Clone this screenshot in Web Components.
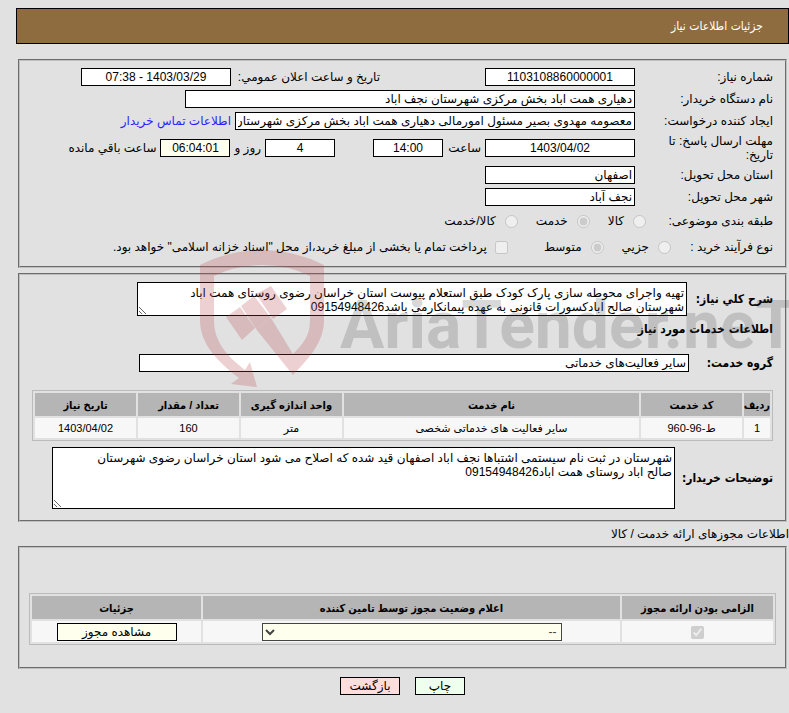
<!DOCTYPE html>
<html lang="fa" dir="rtl">
<head>
<meta charset="utf-8">
<title>جزئیات اطلاعات نیاز</title>
<style>
    body {
        --ff-base: "Liberation Sans", "DejaVu Sans", sans-serif;
        --ff-narrow: "DejaVu Sans Condensed", "DejaVu Sans", sans-serif;
        --clr-field: #fff;
        --clr-cream: #ffffee;
        --clr-head: #b5b5b5;
        margin: 8px 0 8px 16px;
        background: #e1e1e1;
        color: #000;
        font: 12px/14px var(--ff-base);
        direction: rtl;
    }
</style>
</head>
<body>
<need-page></need-page>

<script>
const fieldCss = `
    * { box-sizing: border-box; }
    input, textarea, select, button {
        margin: 0;
        font: 12px/14px var(--ff-base);
        color: #000;
        border: 1px solid #000;
        border-radius: 0;
        direction: rtl;
    }
    input[type=radio], input[type=checkbox] {
        width: 13px;
        height: 13px;
        flex: none;
    }
`;

class PageBanner extends HTMLElement {
    connectedCallback() {
        this.attachShadow({ mode: 'open' }).innerHTML = `
            <style>
                :host {
                    display: block;
                    margin-bottom: 15px;
                    padding: 10px 25px;
                    border: 1px solid #000;
                    background: #8f6c3f;
                    color: #fff;
                }
                h1 { margin: 0; font: 12px/14px var(--ff-narrow); }
            </style>
            <h1><slot></slot></h1>
        `;
    }
}
customElements.define('page-banner', PageBanner);

class FormPanel extends HTMLElement {
    connectedCallback() {
        this.attachShadow({ mode: 'open' }).innerHTML = `
            <style>
                :host { display: block; margin: 0 2px 5px; }
                fieldset {
                    display: flex;
                    flex-direction: column;
                    gap: 4px;
                    min-width: 0;
                    margin: 0;
                    padding: var(--panel-pad, 7px 12px 8px);
                    border: 2px groove #c0c0c0;
                }
            </style>
            <fieldset><slot></slot></fieldset>
        `;
    }
}
customElements.define('form-panel', FormPanel);

class FormRow extends HTMLElement {
    connectedCallback() {
        this.attachShadow({ mode: 'open' }).innerHTML = `
            <style>
                :host { display: flex; align-items: center; gap: 4px; white-space: nowrap; }
            </style>
            <slot></slot>
        `;
    }
}
customElements.define('form-row', FormRow);

// one line read-only box with its caption on the right
class TextField extends HTMLElement {
    connectedCallback() {
        const label = this.getAttribute('label') || '';
        const value = this.getAttribute('value') || '';
        const size = this.getAttribute('size') || '150';
        const place = this.hasAttribute('centered') ? 'center' : 'right';
        const hint = this.getAttribute('hint') || '';
        this.attachShadow({ mode: 'open' }).innerHTML = `
            <style>
                ${fieldCss}
                :host { display: flex; align-items: center; min-width: 0; }
                label {
                    flex: none;
                    width: var(--label-w, auto);
                    padding-left: var(--label-gap, 0);
                    font: var(--label-font, inherit);
                    white-space: normal;
                }
                input {
                    width: ${size}px;
                    min-width: 0;
                    height: 18px;
                    padding: 0 2px;
                    background: var(--field-bg, var(--clr-field));
                    text-align: ${place};
                }
            </style>
            ${label ? `<label for="box">${label}</label>` : ''}
            <input id="box" type="text" readonly value="${value}" ${hint ? `aria-label="${hint}"` : ''}>
        `;
    }
}
customElements.define('text-field', TextField);

class AreaField extends HTMLElement {
    connectedCallback() {
        const label = this.getAttribute('label');
        this.attachShadow({ mode: 'open' }).innerHTML = `
            <style>
                ${fieldCss}
                :host { display: flex; align-items: center; gap: 4px; }
                label { flex: none; width: var(--label-w, 82px); font: bold 12px/14px var(--ff-narrow); white-space: nowrap; }
                textarea {
                    width: var(--area-w, 550px);
                    min-width: 0;
                    height: var(--area-h, 34px);
                    padding: 3px 2px 1px 18px;
                    overflow: hidden;
                    background: var(--clr-field);
                }
            </style>
            <label for="area">${label}</label>
            <textarea id="area" readonly></textarea>
        `;
        this.shadowRoot.querySelector('textarea').value = this.getAttribute('value');
    }
}
customElements.define('area-field', AreaField);

class ChoiceGroup extends HTMLElement {
    connectedCallback() {
        const options = this.getAttribute('options').split(',');
        const picked = Number(this.getAttribute('picked'));
        this.attachShadow({ mode: 'open' }).innerHTML = `
            <style>
                ${fieldCss}
                :host { display: block; }
                div { display: flex; align-items: center; height: 22px; }
                .caption { width: var(--label-w, 127px); flex: none; }
                label { display: flex; align-items: center; gap: 9px; margin-left: 18px; }
                label:last-child { margin-left: 0; }
            </style>
            <div role="radiogroup" aria-labelledby="cap">
                <span class="caption" id="cap">${this.getAttribute('label')}</span>
                ${options.map((text, i) => `
                    <label><input type="radio" name="choice" disabled ${i === picked ? 'checked' : ''}>${text}</label>
                `).join('')}
            </div>
        `;
    }
}
customElements.define('choice-group', ChoiceGroup);

class CheckField extends HTMLElement {
    connectedCallback() {
        this.attachShadow({ mode: 'open' }).innerHTML = `
            <style>
                ${fieldCss}
                :host { display: block; }
                label { display: flex; align-items: center; gap: 8px; }
            </style>
            <label><input type="checkbox" disabled><slot></slot></label>
        `;
    }
}
customElements.define('check-field', CheckField);

class ActionButton extends HTMLElement {
    connectedCallback() {
        this.attachShadow({ mode: 'open' }).innerHTML = `
            <style>
                ${fieldCss}
                :host { display: inline-block; vertical-align: top; }
                button {
                    display: block;
                    width: ${this.getAttribute('size')}px;
                    height: 18px;
                    padding: 0;
                    background: var(--button-bg, var(--clr-cream));
                }
            </style>
            <button type="button"><slot></slot></button>
        `;
    }
}
customElements.define('action-button', ActionButton);

const tableCss = `
    ${fieldCss}
    :host { display: block; }
    table {
        width: 100%;
        table-layout: fixed;
        border: 1px solid #bbb;
        border-collapse: separate;
        border-spacing: 2px;
        font-size: 11px;
        text-align: center;
    }
    th {
        height: 23px;
        padding: 0;
        background: var(--clr-head);
        font-family: "Liberation Sans", var(--ff-narrow);
        white-space: nowrap;
    }
    td { height: 20px; padding: 0; background: #f7f7f7; }
`;

class ServiceTable extends HTMLElement {
    connectedCallback() {
        this.attachShadow({ mode: 'open' }).innerHTML = `
            <style>
                ${tableCss}
                col { width: 101px; }
                .num { width: 26px; }
                .name { width: auto; }
            </style>
            <table>
                <colgroup><col class="num"><col><col class="name"><col><col><col></colgroup>
                <thead>
                    <tr><th>ردیف</th><th>کد خدمت</th><th>نام خدمت</th><th>واحد اندازه گیری</th><th>تعداد / مقدار</th><th>تاریخ نیاز</th></tr>
                </thead>
                <tbody>
                    <tr><td>1</td><td>ط-96-960</td><td>سایر فعالیت های خدماتی شخصی</td><td>متر</td><td>160</td><td>1403/04/02</td></tr>
                </tbody>
            </table>
        `;
    }
}
customElements.define('service-table', ServiceTable);

class PermitTable extends HTMLElement {
    connectedCallback() {
        this.attachShadow({ mode: 'open' }).innerHTML = `
            <style>
                ${tableCss}
                .must { width: 151px; }
                .more { width: 169px; }
                td { height: 21px; }
                td > * { vertical-align: middle; }
                select {
                    display: block;
                    width: 300px;
                    max-width: 100%;
                    height: 18px;
                    margin: 0 auto;
                    padding: 0;
                    border-color: #444;
                    background-color: var(--clr-cream);
                    color: #444;
                }
            </style>
            <table>
                <colgroup><col class="must"><col><col class="more"></colgroup>
                <thead>
                    <tr><th id="must">الزامی بودن ارائه مجوز</th><th id="state">اعلام وضعیت مجوز توسط تامین کننده</th><th>جزئیات</th></tr>
                </thead>
                <tbody>
                    <tr>
                        <td><input type="checkbox" checked disabled aria-labelledby="must"></td>
                        <td><select aria-labelledby="state"><option>--</option></select></td>
                        <td><action-button size="120">مشاهده مجوز</action-button></td>
                    </tr>
                </tbody>
            </table>
        `;
    }
}
customElements.define('permit-table', PermitTable);

// translucent brand mark laid over the form
class BrandMark extends HTMLElement {
    connectedCallback() {
        this.attachShadow({ mode: 'open' }).innerHTML = `
            <style>
                :host {
                    position: absolute;
                    top: 240px;
                    left: 190px;
                    right: 0;
                    height: 155px;
                    display: flex;
                    direction: ltr;
                    overflow: hidden;
                    pointer-events: none;
                }
                svg { flex: none; width: 150px; height: 155px; fill: #b84346; opacity: 0.24; }
                span {
                    padding-top: 48px;
                    font: bold 66px/76px Roboto, "Liberation Sans", sans-serif;
                    color: rgba(60, 60, 60, 0.2);
                }
            </style>
            <svg viewBox="0 0 150 155" aria-hidden="true">
                <path d="M10 25Q40 10 72 10T134 25V80C134 103 118 119 103 135L66 89L81 78L103 114C113 104 120 96 120 80V36Q98 25 72 25T24 36V80C24 102 37 116 55 130L60 122L67 147L41 144L49 138C28 122 10 104 10 80Z"/>
                <path d="M36 77L50 67L65 88L52 100ZM51 66L64 56L81 78L66 89ZM66 54L81 46L97 69L83 79Z"/>
            </svg>
            <span>AriaTender.neT</span>
        `;
    }
}
customElements.define('brand-mark', BrandMark);

class NeedPage extends HTMLElement {
    connectedCallback() {
        this.attachShadow({ mode: 'open' }).innerHTML = `
            <style>
                :host { display: block; }
                a { color: #2a1fff; text-decoration: none; }
                h2 { margin: 2px 0 14px; font: bold 12px/14px var(--ff-narrow); }
                p { margin: 0 0 5px; }
                .main { --label-w: 138px; --label-gap: 25px; }
                .public { --label-w: 149px; margin-right: 101px; }
                .unit { min-width: 34px; }
                .hour { margin-left: 34px; }
                .left { --field-bg: var(--clr-cream); }
                .kind { --label-w: 127px; }
                .process { --label-w: 102px; margin-left: 32px; }
                .details { --panel-pad: 7px 12px 11px; }
                .group { --label-w: 84px; --label-font: bold 12px/14px var(--ff-narrow); margin-bottom: 14px; }
                .notes { --label-w: 94px; --area-w: 623px; --area-h: 62px; margin-top: 2px; }
                .permits { --panel-pad: 45px 9px 22px; }
                .actions { display: flex; justify-content: center; gap: 15px; margin-top: 8px; }
                .print { --button-bg: #eeffee; }
                .back { --button-bg: #ffdddd; }
            </style>
            <page-banner>جزئیات اطلاعات نیاز</page-banner>
            <main>
                <form-panel>
                    <form-row>
                        <text-field class="main" label="شماره نیاز:" value="1103108860000001" centered></text-field>
                        <text-field class="public" label="تاریخ و ساعت اعلان عمومي:" value="1403/03/29 - 07:38" centered></text-field>
                    </form-row>
                    <text-field class="main" label="نام دستگاه خریدار:" value="دهیاری همت اباد بخش مرکزی شهرستان نجف اباد" size="450"></text-field>
                    <form-row>
                        <text-field class="main" label="ایجاد کننده درخواست:" value="معصومه مهدوی بصیر مسئول امورمالی دهیاری همت اباد بخش مرکزی شهرستان نجف اباد" size="400"></text-field>
                        <a href="#">اطلاعات تماس خریدار</a>
                    </form-row>
                    <form-row>
                        <text-field class="main" label="مهلت ارسال پاسخ: تا تاریخ:" value="1403/04/02" centered></text-field>
                        <span class="unit">ساعت</span>
                        <text-field class="hour" value="14:00" size="70" hint="ساعت" centered></text-field>
                        <text-field value="4" size="70" hint="روز" centered></text-field>
                        <span>روز و</span>
                        <text-field class="left" value="06:04:01" size="70" hint="ساعت باقي مانده" centered></text-field>
                        <span>ساعت باقي مانده</span>
                    </form-row>
                    <text-field class="main" label="استان محل تحویل:" value="اصفهان"></text-field>
                    <text-field class="main" label="شهر محل تحویل:" value="نجف آباد"></text-field>
                    <choice-group class="kind" label="طبقه بندی موضوعی:" options="کالا,خدمت,کالا/خدمت" picked="1"></choice-group>
                    <form-row>
                        <choice-group class="process" label="نوع فرآیند خرید :" options="جزیي,متوسط" picked="1"></choice-group>
                        <check-field>پرداخت تمام یا بخشی از مبلغ خرید،از محل "اسناد خزانه اسلامی" خواهد بود.</check-field>
                    </form-row>
                </form-panel>
                <form-panel class="details">
                    <area-field label="شرح کلي نیاز:" value="تهیه واجرای محوطه سازی پارک کودک طبق استعلام پیوست استان خراسان رضوی روستای همت اباد شهرستان صالح ابادکسورات قانونی به عهده پیمانکارمی باشد09154948426"></area-field>
                    <h2>اطلاعات خدمات مورد نیاز</h2>
                    <text-field class="group" label="گروه خدمت:" value="سایر فعالیت‌های خدماتی" size="550"></text-field>
                    <service-table></service-table>
                    <area-field class="notes" label="توضیحات خریدار:" value="شهرستان در ثبت نام سیستمی اشتباها نجف اباد اصفهان قید شده که اصلاح می شود استان خراسان رضوی شهرستان صالح اباد روستای همت اباد09154948426"></area-field>
                </form-panel>
                <p>اطلاعات مجوزهای ارائه خدمت / کالا</p>
                <form-panel class="permits">
                    <permit-table></permit-table>
                </form-panel>
                <div class="actions">
                    <action-button class="print" size="50">چاپ</action-button>
                    <action-button class="back" size="60">بازگشت</action-button>
                </div>
            </main>
            <brand-mark></brand-mark>
        `;
    }
}
customElements.define('need-page', NeedPage);
</script>
</body>
</html>
